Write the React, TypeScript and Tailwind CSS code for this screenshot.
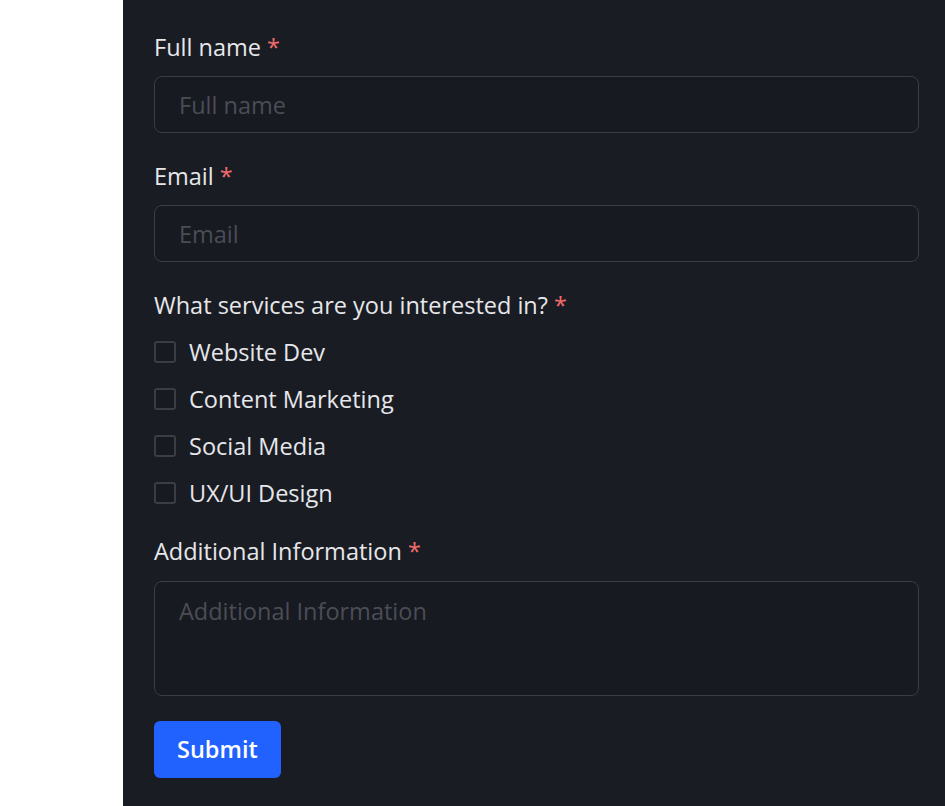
import React from "react";

const font = { fontFamily: '"Open Sans", "Noto Sans", sans-serif' };

function Label({ children }: { children: React.ReactNode }) {
  return (
    <div className="text-[23.5px] leading-[30px] text-[#e6e7ea]">
      {children} <span className="text-[#f26b6b]">*</span>
    </div>
  );
}

function Field({ label }: { label: string }) {
  return (
    <div className="flex flex-col gap-[14px]">
      <Label>{label}</Label>
      <input
        placeholder={label}
        className="h-[57px] w-full rounded-[8px] border border-[#3a3d46] bg-[#181a21] px-[24px] text-[23.5px] text-[#e6e7ea] outline-none placeholder:text-[#4a4d56]"
        style={font}
      />
    </div>
  );
}

export default function App() {
  const services = ["Website Dev", "Content Marketing", "Social Media", "UX/UI Design"];
  return (
    <div className="flex min-h-[806px] w-full bg-white" style={font}>
      <div className="w-[123px] shrink-0 bg-white" />
      <div className="flex flex-1 flex-col gap-[28px] bg-[#1a1c24] pb-[28px] pl-[31px] pr-[26px] pt-[32px]">
        <Field label="Full name" />
        <Field label="Email" />
        <div className="flex flex-col gap-[17px]">
          <Label>What services are you interested in?</Label>
          {services.map((s) => (
            <label key={s} className="flex h-[30px] items-center gap-[13px]">
              <span className="h-[22px] w-[22px] shrink-0 rounded-[3px] border-2 border-[#3a3d46] bg-[#181a21]" />
              <span className="text-[23.5px] leading-[30px] text-[#e6e7ea]">{s}</span>
            </label>
          ))}
        </div>
        <div className="flex flex-col gap-[15px]">
          <Label>Additional Information</Label>
          <textarea
            placeholder="Additional Information"
            className="h-[115px] w-full resize-none rounded-[8px] border border-[#3a3d46] bg-[#181a21] px-[24px] py-[14px] text-[23.5px] leading-[30px] text-[#e6e7ea] outline-none placeholder:text-[#4a4d56]"
            style={font}
          />
        </div>
        <div className="-mt-[3px]">
          <button
            className="h-[57px] rounded-[6px] bg-[#2162fe] px-[23px] text-[23.5px] font-semibold text-white"
            style={font}
          >
            Submit
          </button>
        </div>
      </div>
    </div>
  );
}
